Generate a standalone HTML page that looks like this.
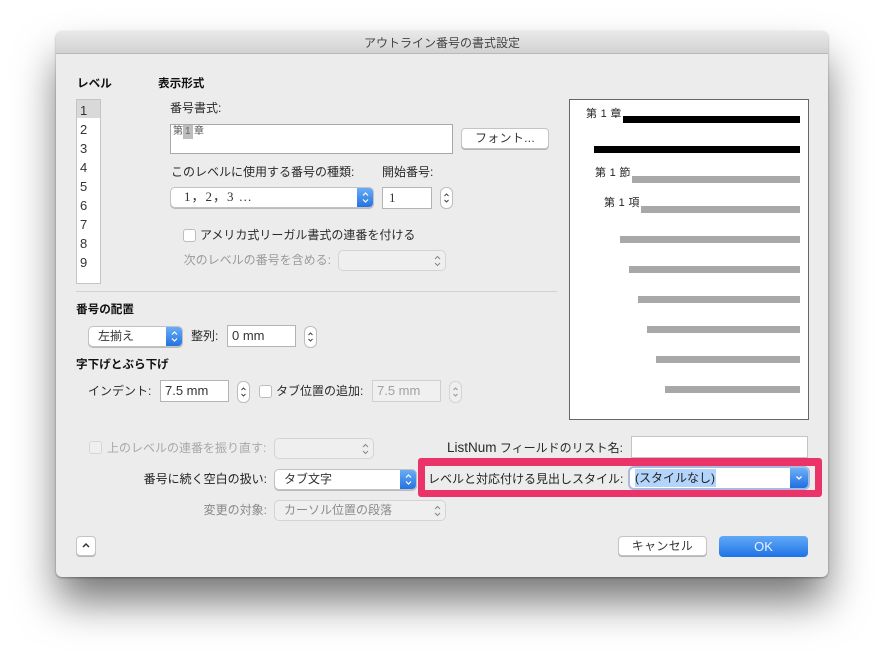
<!DOCTYPE html>
<html><head><meta charset="utf-8">
<style>
html,body{margin:0;padding:0;width:884px;height:657px;overflow:hidden;background:#fff}
body{position:relative;font-family:"Liberation Sans","Noto Sans CJK JP",sans-serif;font-size:12px;color:#2a2a2a}
.a{position:absolute}
.t{position:absolute;white-space:nowrap;line-height:16px;height:16px}
.r{text-align:right}
.b{font-weight:700;font-size:11.6px;color:#111}
.g{color:#a8a8a8}
.f{position:absolute;background:#fff;border:1px solid #b4b4b4;box-sizing:border-box;padding-left:4px;font-size:13px;line-height:20px;color:#333}
.sel{position:absolute;box-sizing:border-box;background:#fff;border:1px solid #c2c2c2;border-radius:5px;height:21px;line-height:18px;overflow:hidden;color:#333;box-shadow:0 1px 0 #bbb}
.sel .bl{position:absolute;right:-1px;top:-1px;bottom:-1px;width:17px;background:linear-gradient(#6db0f7,#1f6fe0)}
.sel.dis{background:#efefef;border-color:#d4d4d4;box-shadow:none;color:#a0a0a0}
.bl svg,.sel svg,.st svg{position:absolute;left:0;top:0}
.st{position:absolute;box-sizing:border-box;width:13px;height:22px;background:#fff;border:1px solid #bdbdbd;border-radius:6px}
.st.dis{background:#efefef;border-color:#d4d4d4}
.cb{position:absolute;box-sizing:border-box;width:13px;height:13px;background:#fff;border:1px solid #bdbdbd;border-radius:3px}
.cb.dis{background:#efefef;border-color:#d6d6d6}
.btn{position:absolute;box-sizing:border-box;background:#fff;border:1px solid #c4c4c4;border-radius:4px;text-align:center;box-shadow:0 1px 0 #b4b4b4;color:#333}
.bar{position:absolute;right:84px;height:7px;background:#a8a8a8}
.k{background:#000}
</style></head><body>

<div class="a" style="left:56px;top:31px;width:772px;height:546px;border-radius:6px;background:#ececec;box-shadow:0 26px 42px -2px rgba(0,0,0,.55),0 1px 2px rgba(0,0,0,.35);overflow:hidden">
<div class="a" style="left:0;top:0;width:772px;height:22px;background:linear-gradient(#e9e9e9,#d2d2d2);border-bottom:1px solid #b9b9b9"></div>
</div>
<div class="t" style="left:56px;width:772px;top:35px;text-align:center;color:#444">アウトライン番号の書式設定</div>

<!-- Level -->
<div class="t b" style="left:77px;top:76px">レベル</div>
<div class="a" style="left:76px;top:99px;width:25px;height:185px;box-sizing:border-box;background:#fff;border:1px solid #c4c4c4"></div>
<div class="a" style="left:77px;top:100px;width:23px;height:18px;background:#d9d9d9"></div>
<div class="a" style="left:80px;top:101px;font-size:13px;line-height:19px;color:#333">1<br>2<br>3<br>4<br>5<br>6<br>7<br>8<br>9</div>

<!-- Display format -->
<div class="t b" style="left:158px;top:76px">表示形式</div>
<div class="t" style="left:170px;top:100px">番号書式:</div>
<div class="a" style="left:170px;top:124px;width:283px;height:30px;box-sizing:border-box;background:#fff;border:1px solid #a8a8a8"></div>
<div class="a" style="left:183px;top:125px;width:10px;height:14px;background:#bdbdbd"></div>
<div class="t" style="left:173px;top:124px;font-size:10px;color:#555;letter-spacing:0">第</div>
<div class="t" style="left:185px;top:124px;font-size:10px;color:#666">1</div>
<div class="t" style="left:194px;top:124px;font-size:10px;color:#555">章</div>
<div class="btn" style="left:461px;top:128px;width:88px;height:21px;line-height:19px;letter-spacing:.3px">フォント...</div>

<div class="t" style="left:171px;top:164px">このレベルに使用する番号の種類:</div>
<div class="t" style="left:382px;top:164px">開始番号:</div>
<div class="sel" style="left:170px;top:187px;width:204px;padding-left:13px;font-family:'Liberation Serif','Noto Sans CJK JP',serif;font-size:13px;letter-spacing:1px">1，2，3 …<div class="bl"><svg width="17" height="21" fill="none" stroke="#fff" stroke-width="1.2"><path d="M6 8.5 8.5 6 11 8.5M6 12.5 8.5 15 11 12.5"/></svg></div></div>
<div class="f" style="left:382px;top:187px;width:50px;height:22px;padding-left:6px;font-family:'Liberation Serif',serif">1</div>
<div class="st" style="left:440px;top:187px"><svg width="11" height="20" fill="none" stroke="#444" stroke-width="1"><path d="M3.5 8 5.5 6 7.5 8M3.5 12 5.5 14 7.5 12"/></svg></div>

<div class="cb" style="left:183px;top:229px"></div>
<div class="t" style="left:200px;top:227px">アメリカ式リーガル書式の連番を付ける</div>
<div class="t r g" style="left:180px;width:151px;top:252px;color:#9a9a9a">次のレベルの番号を含める:</div>
<div class="sel dis" style="left:338px;top:250px;width:108px"><svg style="left:90px" width="17" height="20" fill="none" stroke="#888" stroke-width="1"><path d="M6 8 8.5 5.5 11 8M6 12 8.5 14.5 11 12"/></svg></div>

<div class="a" style="left:76px;top:291px;width:481px;height:1px;background:#d2d2d2"></div>

<!-- Alignment -->
<div class="t b" style="left:76px;top:302px">番号の配置</div>
<div class="sel" style="left:88px;top:326px;width:95px;padding-left:9px">左揃え<div class="bl"><svg width="17" height="21" fill="none" stroke="#fff" stroke-width="1.2"><path d="M6 8.5 8.5 6 11 8.5M6 12.5 8.5 15 11 12.5"/></svg></div></div>
<div class="t" style="left:191px;top:328px">整列:</div>
<div class="f" style="left:227px;top:325px;width:69px;height:22px">0 mm</div>
<div class="st" style="left:304px;top:326px"><svg width="11" height="20" fill="none" stroke="#444" stroke-width="1"><path d="M3.5 8 5.5 6 7.5 8M3.5 12 5.5 14 7.5 12"/></svg></div>

<div class="t b" style="left:76px;top:357px">字下げとぶら下げ</div>
<div class="t" style="left:88px;top:383px">インデント:</div>
<div class="f" style="left:160px;top:380px;width:69px;height:22px">7.5 mm</div>
<div class="st" style="left:237px;top:381px"><svg width="11" height="20" fill="none" stroke="#444" stroke-width="1"><path d="M3.5 8 5.5 6 7.5 8M3.5 12 5.5 14 7.5 12"/></svg></div>
<div class="cb" style="left:259px;top:385px"></div>
<div class="t" style="left:276px;top:383px">タブ位置の追加:</div>
<div class="f" style="left:372px;top:380px;width:69px;height:22px;color:#a0a0a0;border-color:#d0d0d0;background:#f0f0f0">7.5 mm</div>
<div class="st dis" style="left:449px;top:381px"><svg width="11" height="20" fill="none" stroke="#999" stroke-width="1"><path d="M3.5 8 5.5 6 7.5 8M3.5 12 5.5 14 7.5 12"/></svg></div>

<!-- Preview -->
<div class="a" style="left:569px;top:99px;width:240px;height:321px;box-sizing:border-box;background:#fff;border:1px solid #666"></div>
<div class="t" style="left:586px;top:106px;font-size:11px;color:#222;letter-spacing:.3px">第 1 章</div>
<div class="t" style="left:595px;top:165px;font-size:11px;color:#222;letter-spacing:.3px">第 1 節</div>
<div class="t" style="left:604px;top:195px;font-size:11px;color:#222;letter-spacing:.3px">第 1 項</div>
<div class="bar k" style="left:623px;top:116px"></div>
<div class="bar k" style="left:594px;top:146px"></div>
<div class="bar" style="left:632px;top:176px"></div>
<div class="bar" style="left:641px;top:206px"></div>
<div class="bar" style="left:620px;top:236px"></div>
<div class="bar" style="left:629px;top:266px"></div>
<div class="bar" style="left:638px;top:296px"></div>
<div class="bar" style="left:647px;top:326px"></div>
<div class="bar" style="left:656px;top:356px"></div>
<div class="bar" style="left:665px;top:386px"></div>

<!-- Lower -->
<div class="cb dis" style="left:89px;top:441px"></div>
<div class="t g" style="left:107px;top:440px">上のレベルの連番を振り直す:</div>
<div class="sel dis" style="left:274px;top:438px;width:100px"><svg style="left:82px" width="17" height="20" fill="none" stroke="#888" stroke-width="1"><path d="M6 8 8.5 5.5 11 8M6 12 8.5 14.5 11 12"/></svg></div>
<div class="t r" style="left:100px;width:167px;top:471px;color:#222">番号に続く空白の扱い:</div>
<div class="sel" style="left:274px;top:469px;width:143px;padding-left:9px">タブ文字<div class="bl"><svg width="17" height="21" fill="none" stroke="#fff" stroke-width="1.2"><path d="M6 8.5 8.5 6 11 8.5M6 12.5 8.5 15 11 12.5"/></svg></div></div>
<div class="t r" style="left:150px;width:117px;top:502px;color:#888">変更の対象:</div>
<div class="sel dis" style="left:274px;top:500px;width:172px;padding-left:9px;color:#8a8a8a">カーソル位置の段落<svg style="left:154px" width="17" height="20" fill="none" stroke="#888" stroke-width="1"><path d="M6 8 8.5 5.5 11 8M6 12 8.5 14.5 11 12"/></svg></div>

<div class="t r" style="left:420px;width:203px;top:440px"><span style="font-size:13.5px">ListNum</span> フィールドのリスト名:</div>
<div class="a" style="left:631px;top:436px;width:177px;height:22px;box-sizing:border-box;background:#fff;border:1px solid #c4c4c4"></div>

<!-- Highlight -->
<div class="a" style="left:418px;top:458px;width:404px;height:39px;box-sizing:border-box;border:7px solid #ea3368;border-top-width:8px;border-radius:3px;background:#ececec"></div>
<div class="t" style="left:428px;top:471px;color:#222">レベルと対応付ける見出しスタイル:</div>
<div class="a" style="left:630px;top:468px;width:178px;height:20px;box-sizing:border-box;background:#fff;border-radius:4px;box-shadow:0 0 0 2px #a9b9e0"></div>
<div class="a" style="left:635px;top:469px;width:81px;height:18px;background:#b3d4fb"></div>
<div class="t" style="left:635px;top:470px;color:#222;font-size:12px">(スタイルなし)</div>
<div class="a" style="left:790px;top:468px;width:18px;height:20px;border-radius:0 4px 4px 0;background:linear-gradient(#6db0f7,#1f6fe0)"><svg width="18" height="20" fill="none" stroke="#fff" stroke-width="1.3"><path d="M6.5 8.5 9 11 11.5 8.5"/></svg></div>

<!-- Bottom -->
<div class="btn" style="left:76px;top:536px;width:20px;height:20px"><svg class="a" style="left:0;top:0" width="18" height="18" fill="none" stroke="#333" stroke-width="1.5"><path d="M6 10 9 7 12 10"/></svg></div>
<div class="btn" style="left:618px;top:536px;width:89px;height:20px;line-height:18px;letter-spacing:.3px">キャンセル</div>
<div class="a" style="left:719px;top:536px;width:89px;height:21px;border-radius:4px;background:linear-gradient(#62aaf8,#1f72e6);color:#e8f2ff;text-align:center;line-height:21px;font-size:13px">OK</div>

</body></html>
